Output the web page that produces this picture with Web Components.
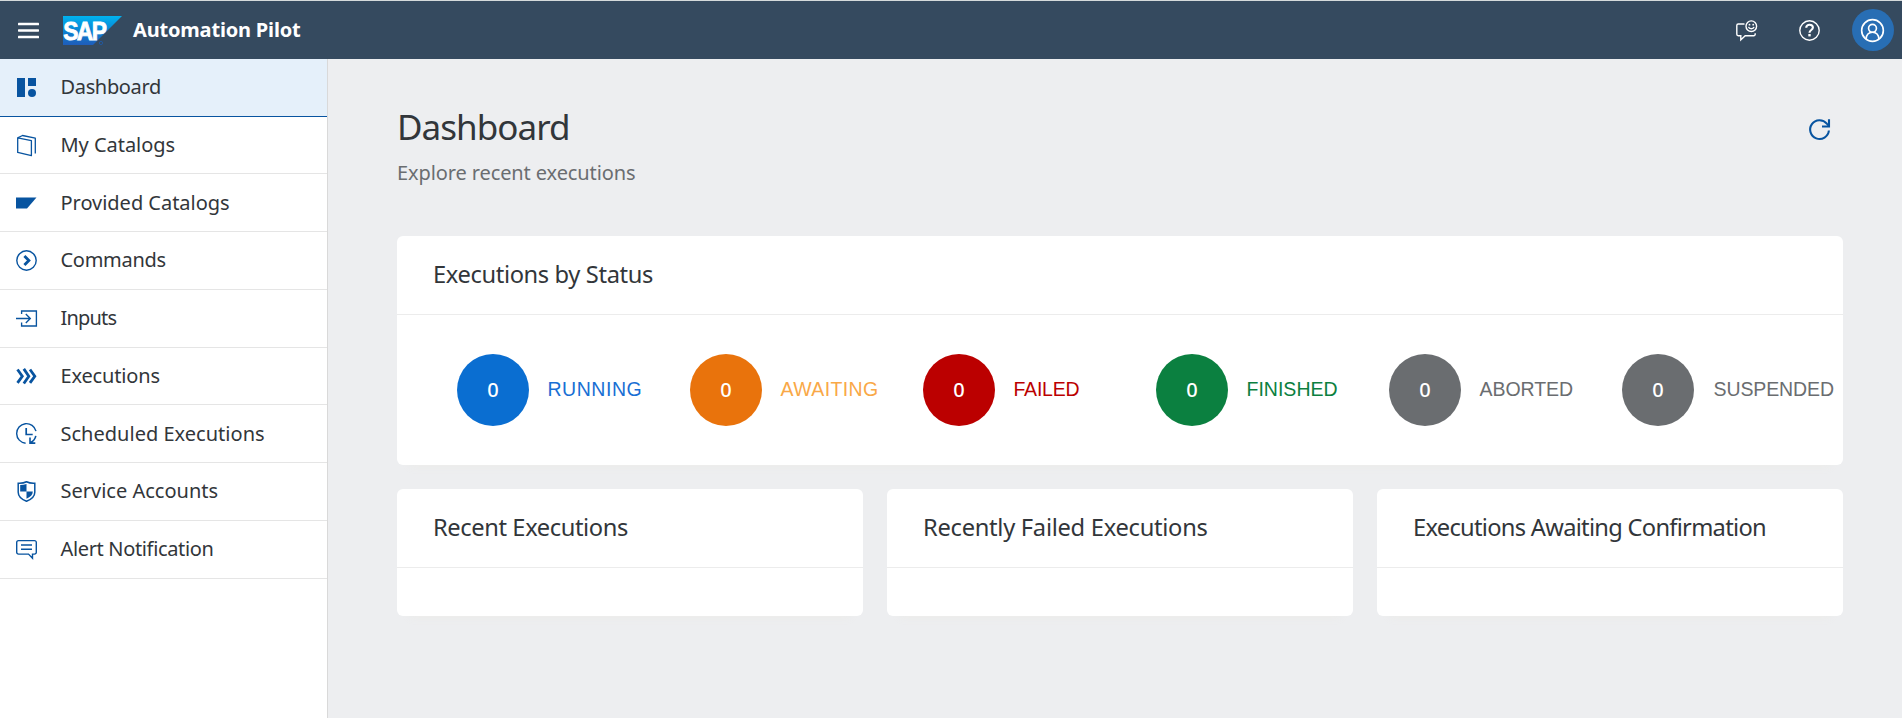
<!DOCTYPE html>
<html lang="en">
<head>
<meta charset="utf-8">
<title>Automation Pilot</title>
<style>
html,body{margin:0;height:100%;overflow:hidden}
body{font-family:"Noto Sans","Open Sans",sans-serif;font-size:20px;color:#32363a;background:#edeef0}
</style>
</head>
<body>
<pilot-app></pilot-app>
<script>
const ICONS = {
  menu: '<g fill="#fff"><rect y="2.8" width="21" height="2.5" rx=".6"/><rect y="9.2" width="21" height="2.5" rx=".6"/><rect y="15.8" width="21" height="2.5" rx=".6"/></g>',
  dashboard: '<g fill="currentColor"><path d="M1 1h8v19H1zM12 1h8v8h-8z"/><circle cx="16" cy="16" r="4"/></g>',
  catalog: '<g fill="none" stroke="currentColor" stroke-width="1.3" stroke-linejoin="round"><path d="M1.700 2.800L15.400 5.600V20.700L1.700 17.400z"/><path d="M1.700 2.800L6.500.500 19.300 3.100V18.400"/></g>',
  provided: '<path fill="currentColor" d="M0 5.500h20.500L11 16.500H0z"/>',
  command: '<circle cx="10.5" cy="10.5" r="9.7" fill="none" stroke="currentColor" stroke-width="1.4"/><path d="M8.400 5.900l4.500 4.600-4.500 4.600" fill="none" stroke="currentColor" stroke-width="2.8"/>',
  input: '<g fill="none" stroke="currentColor" stroke-width="1.35"><path d="M5.6 6V3h14.8v15H5.6v-3.4"/><path d="M0 10.5h14M9.8 6l4.5 4.5L9.8 15"/></g>',
  executions: '<g fill="none" stroke="currentColor" stroke-width="2.8"><path d="M1.5 3.5l4.800 6.700-4.800 6.700M7.800 2.900l5 7.300-5 7.300M14 3.500l4.800 6.700-4.800 6.700"/></g>',
  schedule: '<g fill="none" stroke="currentColor" stroke-width="1.4"><path d="M9.6 20.2A9.8 9.8 0 1 1 20 8.2"/><path d="M10.2 5v6.500h6.500" stroke-width="1.700"/><path d="M19.800 12.800a9 9 0 0 1-5.300 6.600M14 14.600v5.500h5.300" stroke-width="1.600"/></g>',
  shield: '<path d="M10.500.800c2.500 1.200 5.300 1.600 8.300 1.400v9c0 4.200-3.200 7-8.300 9-5.100-2-8.300-4.800-8.300-9v-9c3 .2 5.800-.2 8.300-1.400z" fill="none" stroke="currentColor" stroke-width="1.500"/><path fill="currentColor" d="M4.200 4c2.300 0 4.300-.3 6.300-1v7.500H4.200zM10.500 10.500h6.300c0 3.300-2.300 5.500-6.300 7.200z"/>',
  alert: '<g fill="none" stroke="currentColor" stroke-width="1.400"><path d="M2.500 1.600h16a1.800 1.800 0 0 1 1.800 1.800v9.900a1.800 1.800 0 0 1-1.800 1.800h-2V19.200l-4-4.100h-10A1.800 1.800 0 0 1 .7 13.300V3.400a1.800 1.800 0 0 1 1.800-1.800z"/><path d="M5 6h11M5 10.200h11"/></g>',
  feedback: '<g fill="none" stroke="#fff" stroke-width="1.400"><path d="M8.500 4H2.200A1.400 1.400 0 0 0 .8 5.400v8.900a1.400 1.400 0 0 0 1.400 1.400h2.600v4.200l4.400-4.200h8.600a1.400 1.400 0 0 0 1.400-1.400v-1"/><circle cx="15.300" cy="6.200" r="5.300"/><path d="M12.500 6.900c.8 2.500 4.800 2.500 5.600 0"/></g><g fill="#fff"><circle cx="13.500" cy="4.700" r=".9"/><circle cx="17.200" cy="4.700" r=".9"/></g>',
  help: '<circle cx="10.500" cy="10.500" r="9.700" fill="none" stroke="#fff" stroke-width="1.400"/><path d="M7.200 7.800c0-4.200 6.700-4 6.700-.2 0 2.500-3.400 2.300-3.400 5.100" fill="none" stroke="#fff" stroke-width="2.100"/><rect x="9.300" y="14" width="2.400" height="2.400" fill="#fff"/>',
  user: '<g fill="none" stroke="#fff" stroke-width="1.500"><circle cx="10.500" cy="10.500" r="9.900"/><circle cx="10.500" cy="8.500" r="3.600"/><path d="M4.600 18.300c.3-3.900 2.500-6.200 5.900-6.200s5.600 2.300 5.900 6.200"/></g>',
  refresh: '<g fill="none" stroke="currentColor" stroke-width="2.100"><path d="M19.900 11.500A9.400 9.400 0 1 1 17.800 4.600L19.600 6.500"/><path d="M20 .3v7.200h-7"/></g>'
};

/* Base class: clones a template into an open shadow root. */
class Base extends HTMLElement {
  connectedCallback() {
    if (this.shadowRoot) return;
    const t = document.createElement('template');
    t.innerHTML = this.view();
    this.attachShadow({mode: 'open'}).append(t.content.cloneNode(true));
  }
}

customElements.define('pilot-icon', class extends Base {
  view() {
    const s = this.getAttribute('size') || 21;
    return `<style>:host{display:block;flex:none;width:${s}px;height:${s}px}svg{display:block;overflow:visible}</style>
      <svg width="${s}" height="${s}" viewBox="0 0 21 21">${ICONS[this.getAttribute('name')]}</svg>`;
  }
});

/* One line of text, tracked to a given visible width, side bearings trimmed. */
customElements.define('fit-text', class extends Base {
  view() {
    const cs = getComputedStyle(this), text = this.textContent;
    const ctx = document.createElement('canvas').getContext('2d');
    ctx.font = `${cs.fontWeight} ${cs.fontSize} ${cs.fontFamily}`;
    const m = ctx.measureText(text);
    const ink = m.actualBoundingBoxRight + m.actualBoundingBoxLeft;
    const ls = text.length > 1 ? (this.getAttribute('w') - ink) / (text.length - 1) : 0;
    const nudge = /^[AI]/.test(text) ? -1 : 0;
    return `<style>:host{display:block;flex:none;white-space:nowrap;line-height:1.4}
      span{display:block;letter-spacing:${ls.toFixed(3)}px;margin-left:${(m.actualBoundingBoxLeft + nudge).toFixed(2)}px}</style><span><slot></slot></span>`;
  }
});

customElements.define('sap-logo', class extends Base {
  view() {
    return `<style>:host{display:block;flex:none;width:59px;height:29px}svg{display:block;overflow:visible}</style>
    <svg width="59" height="29" viewBox="0 0 59 29"><defs><linearGradient id="g" x1="0" y1="0" x2="0" y2="1"><stop offset="0" stop-color="#00b3f0"/><stop offset=".5" stop-color="#0a84d3"/><stop offset="1" stop-color="#1f5dba"/></linearGradient></defs>
    <path fill="url(#g)" d="M0 0h59L30 29H0z"/>
    <text x=".3" y="23.500" fill="#fff" stroke="#fff" stroke-width=".8" font-family="Liberation Sans,sans-serif" font-weight="700" font-size="25" letter-spacing="-1.800" textLength="42" lengthAdjust="spacingAndGlyphs">SAP</text>
    <circle cx="38" cy="27" r="1.600" fill="none" stroke="#22589f" stroke-width="1"/></svg>`;
  }
});

customElements.define('shell-bar', class extends Base {
  view() {
    return `<style>
      :host{display:flex;align-items:center;box-sizing:border-box;height:59px;background:#354a5f;border-top:1px solid #d5dadb;padding:0 8px 0 18px;color:#fff}
      sap-logo{margin:0 12px 0 24px}
      fit-text{font-weight:700;margin-bottom:1px}
      .gap{flex:1}
      .avatar{display:flex;align-items:center;box-sizing:border-box;width:42px;height:42px;padding-left:9px;border-radius:50%;background:#286eb4;margin-left:32px}
      [name=help]{margin-left:42px}
    </style>
    <pilot-icon name="menu"></pilot-icon><sap-logo></sap-logo><fit-text w="168">Automation Pilot</fit-text>
    <div class="gap"></div><pilot-icon name="feedback"></pilot-icon><pilot-icon name="help"></pilot-icon>
    <div class="avatar"><pilot-icon name="user" size="23"></pilot-icon></div>`;
  }
});

customElements.define('nav-item', class extends Base {
  view() {
    return `<style>
      :host{display:flex;align-items:center;box-sizing:border-box;height:58px;padding-left:16px;border-bottom:1px solid #e5e5e5}
      :host([short]){height:57px}
      :host([active]){background:#e5f0fa;border-color:#0854a0}
      pilot-icon{color:#0854a0;margin-right:24.500px}
      fit-text{margin-bottom:2px}
      :host([low]) fit-text{margin-bottom:0}
    </style><pilot-icon name="${this.getAttribute('icon')}"></pilot-icon><fit-text w="${this.getAttribute('w')}">${this.textContent}</fit-text>`;
  }
});

customElements.define('side-nav', class extends Base {
  view() {
    return `<style>:host{display:block;box-sizing:border-box;flex:none;width:328px;background:#fff;border-right:1px solid #d9d9d9}</style>
    <nav-item active icon="dashboard" w="98.500">Dashboard</nav-item>
    <nav-item short low icon="catalog" w="113">My Catalogs</nav-item>
    <nav-item low icon="provided" w="167.500">Provided Catalogs</nav-item>
    <nav-item icon="command" w="104">Commands</nav-item>
    <nav-item icon="input" w="56">Inputs</nav-item>
    <nav-item short low icon="executions" w="98">Executions</nav-item>
    <nav-item low icon="schedule" w="202.500">Scheduled Executions</nav-item>
    <nav-item icon="shield" w="156">Service Accounts</nav-item>
    <nav-item icon="alert" w="152">Alert Notification</nav-item>`;
  }
});

customElements.define('dash-card', class extends Base {
  view() {
    return `<style>
      :host{display:flex;flex-direction:column;background:#fff;border-radius:6px;box-shadow:0 14px 8px -12px #ececea}
      header{display:flex;align-items:center;box-sizing:border-box;height:79px;padding:0 0 0 38px;border-bottom:1px solid #ececec;font-size:23.700px}
      .body{flex:1}
    </style><header><fit-text w="${this.getAttribute('w')}">${this.getAttribute('heading')}</fit-text></header><div class="body"><slot></slot></div>`;
  }
});

customElements.define('status-count', class extends Base {
  view() {
    const c = this.getAttribute('color');
    return `<style>
      :host{display:flex;align-items:center;flex:none;width:233px}
      .dot{display:flex;align-items:center;justify-content:center;width:72px;height:72px;border-radius:50%;background:${c};color:#fff;font-weight:500;margin-right:19.500px}
      .dot span{line-height:28px}
      fit-text{color:${this.getAttribute('ink') || c};font-family:"Liberation Sans",Arial,sans-serif;font-size:19.500px}
    </style><div class="dot"><span>0</span></div><fit-text w="${this.getAttribute('w')}">${this.textContent}</fit-text>`;
  }
});

customElements.define('dash-page', class extends Base {
  view() {
    return `<style>
      :host{display:block;flex:1;min-width:0;padding:0 59px 0 69px}
      .top{display:flex;justify-content:space-between;height:177px}
      h1{margin:0;font-weight:400;font-size:35px;padding:42.500px 0 0 3px}
      .sub{color:#6a6d70;padding:8px 0 0 1px}
      pilot-icon{color:#0854a0;margin:60px 13px 0 0}
      .all{height:229px}
      .row{display:flex;padding:39px 0 0 60px}
      .grid{display:grid;grid-template-columns:repeat(3,1fr);gap:24px;margin-top:24px}
      .grid dash-card{height:127px}
    </style>
    <div class="top"><div><h1><fit-text w="168">Dashboard</fit-text></h1><div class="sub"><fit-text w="237">Explore recent executions</fit-text></div></div><pilot-icon name="refresh"></pilot-icon></div>
    <dash-card class="all" heading="Executions by Status" w="218"><div class="row">
      <status-count color="#0a6ed1" ink="#196fd4" w="92">RUNNING</status-count>
      <status-count color="#e9730c" ink="#f9a847" w="96.500">AWAITING</status-count>
      <status-count color="#bb0000" w="65">FAILED</status-count>
      <status-count color="#0b8040" w="90">FINISHED</status-count>
      <status-count color="#6a6d70" w="93.500">ABORTED</status-count>
      <status-count color="#6a6d70" w="120.500" style="width:auto">SUSPENDED</status-count>
    </div></dash-card>
    <div class="grid">
      <dash-card heading="Recent Executions" w="193"></dash-card>
      <dash-card heading="Recently Failed Executions" w="282.500"></dash-card>
      <dash-card heading="Executions Awaiting Confirmation" w="350"></dash-card>
    </div>`;
  }
});

customElements.define('pilot-app', class extends Base {
  view() {
    return `<style>:host{display:flex;flex-direction:column;height:100vh}.main{display:flex;flex:1;min-height:0}</style>
    <shell-bar></shell-bar><div class="main"><side-nav></side-nav><dash-page></dash-page></div>`;
  }
});
</script>
</body>
</html>
